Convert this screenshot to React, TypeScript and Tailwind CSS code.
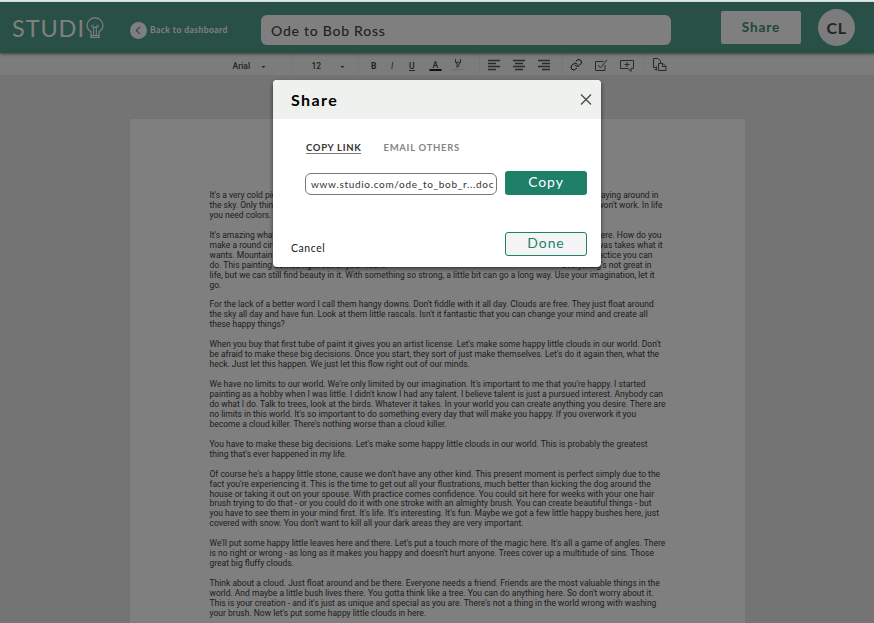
import React from "react";
import { Link } from "lucide-react";

type Line = string | [string, string];

const paragraphs: Line[][] = [
  [
    ["It's a very cold picture,", "Clouds are playing around in"],
    ["the sky. Only think about", "Otherwise it won't work. In life"],
    "you need colors.",
  ],
  [
    ["It's amazing what you can", "It's right there. How do you"],
    ["make a round circle with", "Your challenge was takes what it"],
    ["wants. Mountains are so", "With practice you can"],
    ["do. This painting comes right out of your heart.", "Everything's not great in"],
    "life, but we can still find beauty in it. With something so strong, a little bit can go a long way. Use your imagination, let it",
    "go.",
  ],
  [
    "For the lack of a better word I call them hangy downs. Don't fiddle with it all day. Clouds are free. They just float around",
    "the sky all day and have fun. Look at them little rascals. Isn't it fantastic that you can change your mind and create all",
    "these happy things?",
  ],
  [
    "When you buy that first tube of paint it gives you an artist license. Let's make some happy little clouds in our world. Don't",
    "be afraid to make these big decisions. Once you start, they sort of just make themselves. Let's do it again then, what the",
    "heck. Just let this happen. We just let this flow right out of our minds.",
  ],
  [
    "We have no limits to our world. We're only limited by our imagination. It's important to me that you're happy. I started",
    "painting as a hobby when I was little. I didn't know I had any talent. I believe talent is just a pursued interest. Anybody can",
    "do what I do. Talk to trees, look at the birds. Whatever it takes. In your world you can create anything you desire. There are",
    "no limits in this world. It's so important to do something every day that will make you happy. If you overwork it you",
    "become a cloud killer. There's nothing worse than a cloud killer.",
  ],
  [
    "You have to make these big decisions. Let's make some happy little clouds in our world. This is probably the greatest",
    "thing that's ever happened in my life.",
  ],
  [
    "Of course he's a happy little stone, cause we don't have any other kind. This present moment is perfect simply due to the",
    "fact you're experiencing it. This is the time to get out all your flustrations, much better than kicking the dog around the",
    "house or taking it out on your spouse. With practice comes confidence. You could sit here for weeks with your one hair",
    "brush trying to do that - or you could do it with one stroke with an almighty brush. You can create beautiful things - but",
    "you have to see them in your mind first. It's life. It's interesting. It's fun. Maybe we got a few little happy bushes here, just",
    "covered with snow. You don't want to kill all your dark areas they are very important.",
  ],
  [
    "We'll put some happy little leaves here and there. Let's put a touch more of the magic here. It's all a game of angles. There",
    "is no right or wrong - as long as it makes you happy and doesn't hurt anyone. Trees cover up a multitude of sins. Those",
    "great big fluffy clouds.",
  ],
  [
    "Think about a cloud. Just float around and be there. Everyone needs a friend. Friends are the most valuable things in the",
    "world. And maybe a little bush lives there. You gotta think like a tree. You can do anything here. So don't worry about it.",
    "This is your creation - and it's just as unique and special as you are. There's not a thing in the world wrong with washing",
    "your brush. Now let's put some happy little clouds in here.",
  ],
];

// Widths of the lines that are set as a left and a right part.
const pairWidths = ["w-[449px]", "w-[453px]", "w-[452px]", "w-[453px]", "w-[443px]", "w-[442px]"];

function Document() {
  let pair = 0;
  return (
    <article className="mx-auto h-[504px] w-[615px] bg-white pl-[80px] pt-[72px] text-[8.5px] leading-[9.95px] text-[#3c3c3c]">
      {paragraphs.map((lines, i) => (
        <p key={i} className="mb-[9.95px] whitespace-nowrap">
          {lines.map((line, j) =>
            typeof line === "string" ? (
              <span key={j} className="block">{line}</span>
            ) : (
              <span key={j} className={`flex justify-between ${pairWidths[pair++]}`}>
                <span>{line[0]}</span>
                <span>{line[1]}</span>
              </span>
            ),
          )}
        </p>
      ))}
    </article>
  );
}

function Bulb() {
  return (
    <svg className="h-[22px] w-[18px]" viewBox="0 0 18 22" fill="none" stroke="currentColor" strokeWidth="1.2">
      <path d="M5 16.5V15C2.500 13.200 1 11 1 8.600a8 7.800 0 0 1 16 0c0 2.400-1.500 4.600-4 6.400v1.500M5 16.500v4h8v-4M5 18.700h8" />
      <path d="M7.700 18.500V10.500M10.300 18.500V10.500M7.700 10.500c-3 0-2.600-2.500-1-2.300 1.300.2 1 2.300 1 2.300h2.600s-.3-2.100 1-2.300c1.600-.2 2 2.300-1 2.300" strokeWidth="1" />
    </svg>
  );
}

function Header() {
  return (
    <header className="relative flex h-[51px] items-center bg-[#50a08c] font-[Lato,sans-serif] shadow-[0_1px_3px_rgba(0,0,0,0.5)]">
      <div className="ml-[12px] flex w-[118px] items-center text-white">
        <span className="w-[74px] pt-[3px] text-[23.500px] leading-none tracking-[0.9px]">STUDI</span>
        <Bulb />
      </div>
      <button className="flex w-[131px] items-center gap-[3px] whitespace-nowrap pt-[5px] text-[8.5px] font-bold tracking-[0.45px] text-white">
        <svg className="size-[17px] shrink-0" viewBox="0 0 17 17">
          <circle cx="8.500" cy="8.500" r="8.500" fill="white" />
          <path d="M10 4.800 6.300 8.500 10 12.200" fill="none" stroke="#50a08c" strokeWidth="1.200" />
        </svg>
        Back to dashboard
      </button>
      <div className="mt-[5px] flex h-[30px] w-[410px] items-center rounded-[6px] bg-white pl-[10px] text-[14px] font-medium tracking-[0.75px] text-[#444]">
        Ode to Bob Ross
      </div>
      <button className="ml-[50px] h-[33px] w-[80px] rounded-[2px] bg-white text-[13.500px] font-bold tracking-[0.9px] text-[#3f8f7a]">Share</button>
      <div className="ml-[17px] flex size-[37px] items-center justify-center rounded-full bg-[#f8f8f8] text-[16px] font-bold tracking-[0.5px] text-[#484848]">CL</div>
    </header>
  );
}

function Toolbar() {
  return (
    <svg className="block h-[22px] w-full bg-[#f8f8f8]" viewBox="0 53 874 22" fill="none" stroke="#555" strokeWidth="1" fontFamily="Roboto, sans-serif">
      <path d="M291.500 53v22M358.500 53v22M479.500 53v22M562.500 53v22M644.500 53v22" stroke="#eee" />
      <g fill="#444" stroke="none" fontSize="8.500" fontWeight="500">
        <text x="232.500" y="69.300">Arial</text>
        <text x="311.500" y="69.300">12</text>
        <text x="371" y="69.300" fontWeight="700">B</text>
        <text x="391" y="69.300" fontStyle="italic" fontWeight="400">I</text>
        <text x="409" y="69.300">U</text>
        <text x="432.500" y="68">A</text>
        <path d="M261.500 66h4l-2 2zM340.500 66h4l-2 2z" />
      </g>
      <path d="M409 70.500h6" />
      <path d="M452 69.500h11" stroke="#ddd" />
      <path d="M429.500 70h12" stroke="#222" strokeWidth="2" />
      <path d="M455.500 59v3l1.500 2v3.500l2-1.500v-2l1.500-2v-3M455.500 62.300h5" />
      <path d="M488 60.500h12M488 63.500h8M488 66.500h12M488 69.500h8M513 60.500h12M515 63.500h8M513 66.500h12M515 69.500h8M538 60.500h12M542 63.500h8M538 66.500h12M542 69.500h8" strokeWidth="1.400" />
      <Link x={570} y={58.500} width={12.500} height={12.500} strokeWidth={1.800} />
      <path d="M605 65v5.500h-9.500v-9h8M598 65l2.500 2.800 6.500-8" />
      <path d="M620.500 60.500h13v8h-2.500v3l-3-3h-7.500zM627 62v5M624.500 64.500h5" />
      <path d="M657 67.500h-3.500v-9h4.500l2.500 2.500v2M658.500 63.500h4.500l3 3v4h-7.500zM662.500 63.500v3h3.500M654.500 69.500h2.500M656.500 66.500v4" />
    </svg>
  );
}

function ShareDialog() {
  return (
    <section role="dialog" className="absolute left-[273px] top-[80px] flex h-[187px] w-[328px] flex-col overflow-hidden rounded-[4px] bg-white font-[Lato,sans-serif] shadow-[0_2px_4px_rgba(0,0,0,0.6)]">
      <div className="flex h-[39px] shrink-0 items-center justify-between bg-[#eff1ef] pl-[18px] pr-[9px]">
        <h2 className="text-[16px] font-bold tracking-[1.4px] text-black">Share</h2>
        <svg className="size-[12px]" viewBox="0 0 12 12" stroke="#444" strokeWidth="1.200"><path d="m1 .5 10 10M11 .5 1 10.500" /></svg>
      </div>
      <div className="mt-[23px] flex gap-[22px] pl-[33px] text-[9.500px] font-bold leading-[12px] tracking-[0.7px]">
        <span className="h-[12px] border-b border-[#777] text-[#333]">COPY LINK</span>
        <span className="text-[#858585]">EMAIL OTHERS</span>
      </div>
      <div className="mt-[17px] flex gap-[8px] pl-[32px]">
        <div className="mt-[2px] flex h-[22px] w-[192px] items-center rounded-[6px] border border-[#777] pl-[5px] text-[10px] tracking-[0.68px] text-[#333]">www.studio.com/ode_to_bob_r...doc</div>
        <button className="h-[24px] w-[82px] rounded-[3px] bg-[#1f806a] pb-[3px] text-[14px] leading-[21px] tracking-[0.9px] text-white">Copy</button>
      </div>
      <div className="mt-[36px] flex items-start justify-between pl-[18px] pr-[14px]">
        <button className="mt-[10px] text-[10.500px] leading-[14px] tracking-[0.55px] text-[#222]">Cancel</button>
        <button className="mt-[1px] h-[24px] w-[82px] rounded-[3px] border-[1.5px] border-[#1f806a] bg-[#f4f4f4] pb-[3px] text-[14px] leading-[19px] tracking-[0.9px] text-[#1f806a]">Done</button>
      </div>
    </section>
  );
}

export default function App() {
  return (
    <main className="relative h-[623px] w-[874px] overflow-hidden bg-[#e8e8e8] font-[Roboto,sans-serif]">
      <div className="h-[2px] bg-[#e4efec]" />
      <Header />
      <Toolbar />
      <div className="pt-[44px]"><Document /></div>
      <div className="absolute bottom-0 left-0 right-[0.5px] top-[2px] bg-black/50" />
      <ShareDialog />
    </main>
  );
}
